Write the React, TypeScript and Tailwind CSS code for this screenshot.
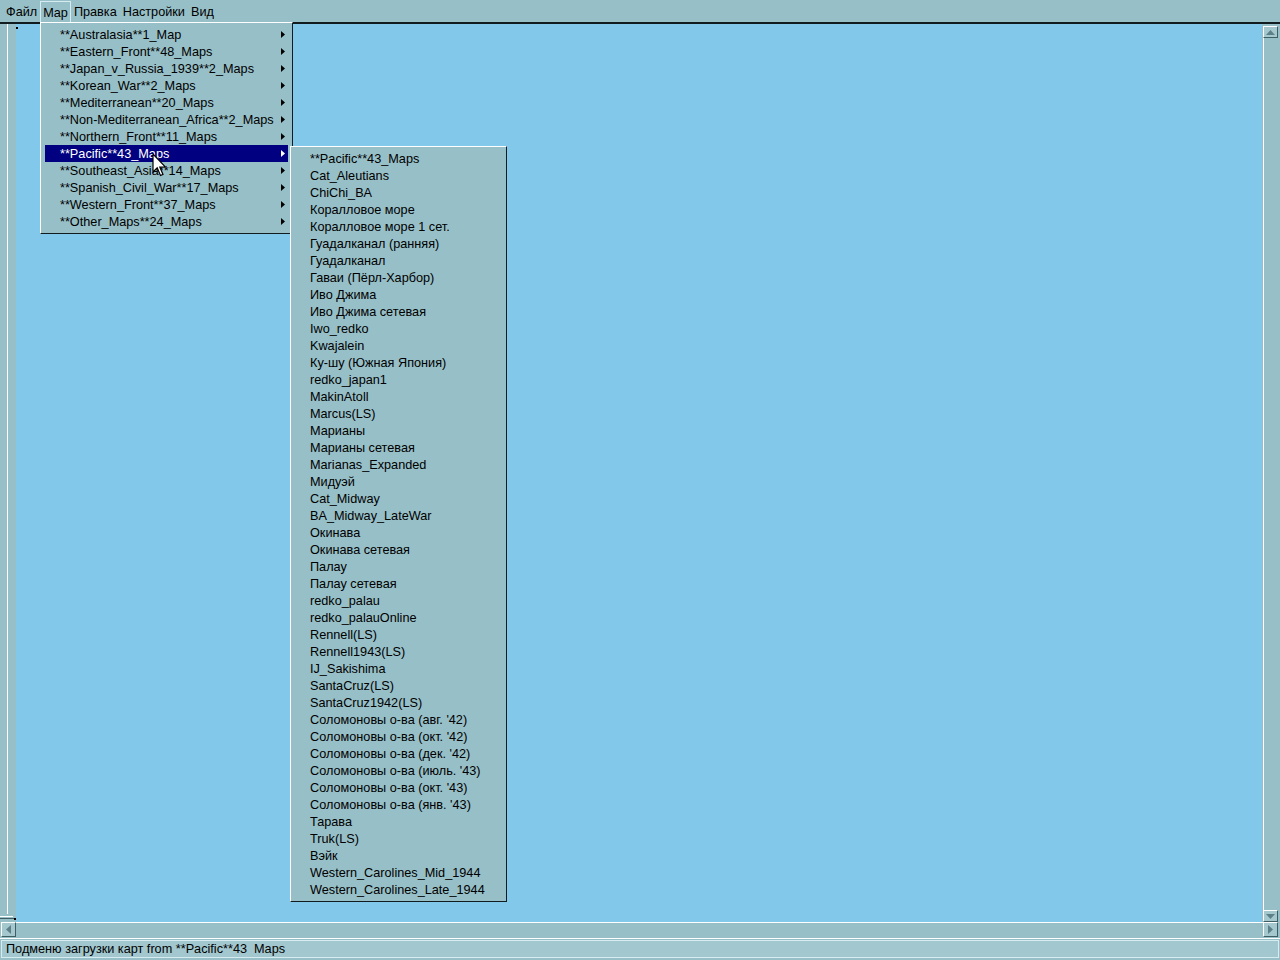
import React from "react";

const topMenu = ["Файл", "Map", "Правка", "Настройки", "Вид"];

const mapGroups = [
  "**Australasia**1_Map",
  "**Eastern_Front**48_Maps",
  "**Japan_v_Russia_1939**2_Maps",
  "**Korean_War**2_Maps",
  "**Mediterranean**20_Maps",
  "**Non-Mediterranean_Africa**2_Maps",
  "**Northern_Front**11_Maps",
  "**Pacific**43_Maps",
  "**Southeast_Asia**14_Maps",
  "**Spanish_Civil_War**17_Maps",
  "**Western_Front**37_Maps",
  "**Other_Maps**24_Maps",
];

const pacificMaps = [
  "**Pacific**43_Maps",
  "Cat_Aleutians",
  "ChiChi_BA",
  "Коралловое море",
  "Коралловое море 1 сет.",
  "Гуадалканал (ранняя)",
  "Гуадалканал",
  "Гаваи (Пёрл-Харбор)",
  "Иво Джима",
  "Иво Джима сетевая",
  "Iwo_redko",
  "Kwajalein",
  "Ку-шу (Южная Япония)",
  "redko_japan1",
  "MakinAtoll",
  "Marcus(LS)",
  "Марианы",
  "Марианы сетевая",
  "Marianas_Expanded",
  "Мидуэй",
  "Cat_Midway",
  "BA_Midway_LateWar",
  "Окинава",
  "Окинава сетевая",
  "Палау",
  "Палау сетевая",
  "redko_palau",
  "redko_palauOnline",
  "Rennell(LS)",
  "Rennell1943(LS)",
  "IJ_Sakishima",
  "SantaCruz(LS)",
  "SantaCruz1942(LS)",
  "Соломоновы о-ва (авг. '42)",
  "Соломоновы о-ва (окт. '42)",
  "Соломоновы о-ва (дек. '42)",
  "Соломоновы о-ва (июль. '43)",
  "Соломоновы о-ва (окт. '43)",
  "Соломоновы о-ва (янв. '43)",
  "Тарава",
  "Truk(LS)",
  "Вэйк",
  "Western_Carolines_Mid_1944",
  "Western_Carolines_Late_1944",
];

function Arrow({ dir }: { dir: "up" | "down" | "left" | "right" }) {
  const d = {
    up: "M0 5L4.5 0L9 5Z",
    down: "M0 0L9 0L4.5 5Z",
    left: "M5 0L5 9L0 4.5Z",
    right: "M0 0L5 4.5L0 9Z",
  }[dir];
  const size = dir === "up" || dir === "down" ? { w: 9, h: 5 } : { w: 5, h: 9 };
  return (
    <svg width={size.w} height={size.h} viewBox={`0 0 ${size.w} ${size.h}`}>
      <path d={d} fill="#5d8088" />
    </svg>
  );
}

function ScrollButton({ dir, h }: { dir: "up" | "down" | "left" | "right"; h: string }) {
  return (
    <div
      className={`flex w-[15px] ${h} items-center justify-center border-l border-t border-l-white border-t-white border-b border-r border-b-[#3e5e64] border-r-[#3e5e64] bg-[#a4c8ce]`}
    >
      <Arrow dir={dir} />
    </div>
  );
}

function SubArrow({ white }: { white?: boolean }) {
  return (
    <svg width="4" height="7" viewBox="0 0 4 7" className="-mt-[2px]">
      <path d="M0 0L4 3.5L0 7Z" fill={white ? "#ffffff" : "#000000"} />
    </svg>
  );
}

export default function App() {
  return (
    <div
      className="relative flex h-[960px] w-[1280px] flex-col overflow-hidden bg-[#97bfc7] text-[12.7px] leading-none text-black"
      style={{ fontFamily: '"Liberation Sans", Arial, sans-serif' }}
    >
      {/* menu bar */}
      <div className="flex h-[22px] items-center pl-[3px]">
        {topMenu.map((item) => (
          <div
            key={item}
            className={
              item === "Map"
                ? "flex h-[21px] items-center self-end border-l border-r border-t border-[#d6ecf0] px-[2px] pt-[2px]"
                : "flex h-[21px] items-center self-end px-[3px] pt-[2px]"
            }
          >
            {item}
          </div>
        ))}
      </div>
      <div className="h-[2px] bg-[#101c1e]" />

      {/* workspace */}
      <div className="flex flex-1">
        <div className="relative w-[16px]">
          <div className="absolute left-[7px] top-0 h-[890px] w-[1px] bg-white" />
          <div className="absolute bottom-[5px] left-0 h-[1px] w-[13px] bg-white" />
          <div className="absolute bottom-[3px] left-0 h-[1px] w-[14px] bg-[#3e5e64]" />
          <div className="absolute bottom-[2px] left-[14px] h-[2px] w-[2px] bg-black" />
        </div>
        <div className="relative flex-1 bg-[#82c8ea]">
          <div className="absolute left-0 top-[3px] h-[2px] w-[2px] bg-black" />
        </div>
        <div className="flex w-[18px] flex-col pl-[1px] pr-[2px] pt-[2px]">
          <ScrollButton dir="up" h="h-[12px]" />
          <div className="flex-1 border-l border-white bg-[#97bfc7]" />
          <ScrollButton dir="down" h="h-[12px]" />
        </div>
      </div>

      {/* horizontal scroll */}
      <div className="flex h-[16px] pl-[1px] pr-[2px]">
        <ScrollButton dir="left" h="h-[15px]" />
        <div className="flex-1 border-t border-white bg-[#97bfc7]" />
        <ScrollButton dir="right" h="h-[15px]" />
      </div>

      {/* status bar */}
      <div className="h-[22px] border-t border-white px-[1px] pb-[2px] pt-[1px]">
        <div className="flex h-full items-center whitespace-pre border border-[#d6ecf0] bg-[#a2c7ce] pl-[4px] pt-[1px]">
          Подменю загрузки карт from **Pacific**43  Maps
        </div>
      </div>

      {/* Map dropdown */}
      <div className="absolute left-[40px] top-[22px] w-[253px] border-b border-l border-r border-t border-b-[#101c1e] border-l-white border-r-[#101c1e] border-t-white bg-[#97bfc7] px-[4px] py-[3px]">
        {mapGroups.map((group) => {
          const active = group === "**Pacific**43_Maps";
          return (
            <div
              key={group}
              className={`flex h-[17px] items-center justify-between pl-[15px] pr-[3px] pt-[2px] ${
                active ? "bg-[#000080] text-white" : ""
              }`}
            >
              <span>{group}</span>
              <SubArrow white={active} />
            </div>
          );
        })}
      </div>

      {/* Pacific submenu */}
      <div className="absolute left-[290px] top-[146px] w-[217px] border-b border-l border-r border-t border-b-[#101c1e] border-l-white border-r-[#101c1e] border-t-white bg-[#97bfc7] px-[4px] py-[3px]">
        {pacificMaps.map((map) => (
          <div key={map} className="flex h-[17px] items-center whitespace-nowrap pl-[15px] pt-[2px]">
            {map}
          </div>
        ))}
      </div>

      {/* mouse cursor */}
      <svg className="absolute left-[152px] top-[153px]" width="14" height="24" viewBox="0 0 14 24">
        <path
          d="M1 1L1 19L5.2 14.8L8.5 22.5L11 21.4L7.8 14L13.5 14Z"
          fill="#ffffff"
          stroke="#000000"
          strokeWidth="1.2"
          strokeLinejoin="miter"
        />
      </svg>
    </div>
  );
}
